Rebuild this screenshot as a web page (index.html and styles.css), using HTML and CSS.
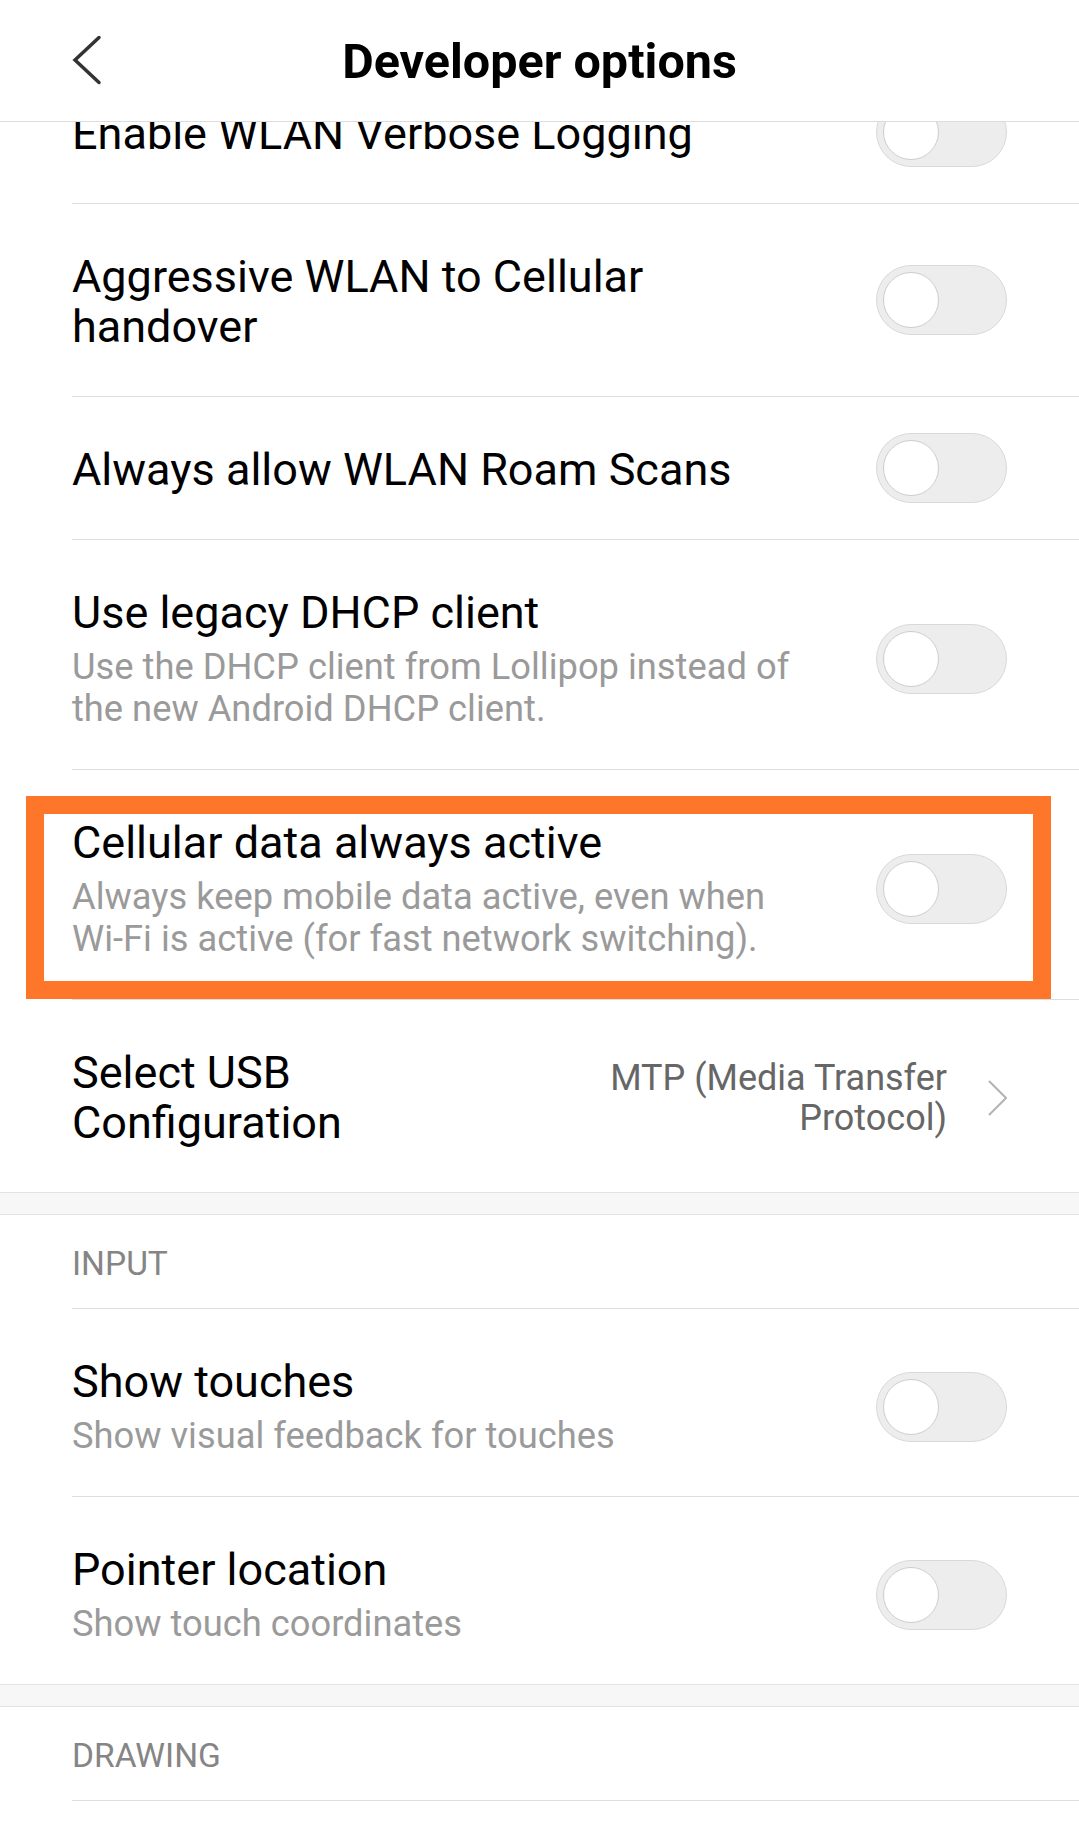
FILE: index.html
```html
<!DOCTYPE html>
<html lang="en">
<head>
<meta charset="utf-8">
<title>Developer options</title>
<link rel="stylesheet" href="styles.css">
</head>
<body>
<div class="screen">
  <header class="topbar">
    <div class="back">
      <svg width="30" height="50" viewBox="0 0 30 50" aria-hidden="true">
        <polyline points="27,2.5 3,25 27,47.5" fill="none" stroke="#333" stroke-width="3.5" stroke-linecap="round" stroke-linejoin="miter"/>
      </svg>
    </div>
    <h1 class="title">Developer options</h1>
    <div class="spacer"></div>
  </header>

  <main class="list">
    <section class="group">
      <div class="row scrolled">
        <div class="text"><div class="t">Enable WLAN Verbose Logging</div></div>
        <span class="switch"><span class="knob"></span></span>
      </div>
      <div class="row">
        <div class="text"><div class="t">Aggressive WLAN to Cellular handover</div></div>
        <span class="switch"><span class="knob"></span></span>
      </div>
      <div class="row">
        <div class="text"><div class="t">Always allow WLAN Roam Scans</div></div>
        <span class="switch"><span class="knob"></span></span>
      </div>
      <div class="row sub">
        <div class="text">
          <div class="t">Use legacy DHCP client</div>
          <div class="s">Use the DHCP client from Lollipop instead of the new Android DHCP client.</div>
        </div>
        <span class="switch"><span class="knob"></span></span>
      </div>
      <div class="row sub highlighted">
        <div class="text">
          <div class="t">Cellular data always active</div>
          <div class="s">Always keep mobile data active, even when Wi-Fi is active (for fast network switching).</div>
        </div>
        <span class="switch"><span class="knob"></span></span>
        <span class="mark"></span>
      </div>
      <div class="row usb last">
        <div class="t usb-title">Select USB Configuration</div>
        <div class="value">MTP (Media Transfer Protocol)</div>
        <svg class="chev" width="19" height="36" viewBox="0 0 19 36" aria-hidden="true">
          <polyline points="1,1 18,18 1,35" fill="none" stroke="#b3b3b3" stroke-width="2"/>
        </svg>
      </div>
    </section>

    <div class="gap"></div>

    <section class="group">
      <div class="section">INPUT</div>
      <div class="row sub">
        <div class="text">
          <div class="t">Show touches</div>
          <div class="s">Show visual feedback for touches</div>
        </div>
        <span class="switch"><span class="knob"></span></span>
      </div>
      <div class="row sub last">
        <div class="text">
          <div class="t">Pointer location</div>
          <div class="s">Show touch coordinates</div>
        </div>
        <span class="switch"><span class="knob"></span></span>
      </div>
    </section>

    <div class="gap"></div>

    <section class="group">
      <div class="section">DRAWING</div>
    </section>
  </main>
</div>
</body>
</html>
```

FILE: styles.css
```css
* {
  box-sizing: border-box;
}

html, body {
  margin: 0;
  padding: 0;
  background: #ffffff;
}

body {
  font-family: Roboto, "Noto Sans", "Liberation Sans", sans-serif;
  color: #000;
}

.screen {
  width: 1079px;
  height: 1843px;
  overflow: hidden;
  background: #fff;
}

.topbar {
  height: 122px;
  display: grid;
  grid-template-columns: 1fr auto 1fr;
  align-items: center;
  border-bottom: 1px solid #dcdcdc;
  background: #fff;
  position: relative;
  z-index: 2;
}

.back {
  padding-left: 72px;
  display: flex;
  align-items: center;
  height: 100%;
  padding-bottom: 2px;
}

.back svg {
  display: block;
}

.title {
  margin: 0;
  font-size: 48.5px;
  font-weight: 700;
  line-height: 1;
  padding-top: 3px;
}

.list {
  overflow: hidden;
}

.row {
  display: flex;
  align-items: center;
  margin-left: 72px;
  padding: 48px 72px 44px 0;
  border-bottom: 1px solid #dddddd;
  position: relative;
}

.row.sub {
  padding-bottom: 39px;
}

.row.last {
  border-bottom: none;
}

.row.scrolled {
  margin-top: -61px;
}

.text {
  flex: 0 1 740px;
}

.t {
  font-size: 45px;
  line-height: 50px;
  color: #000;
}

.s {
  font-size: 36.3px;
  line-height: 42px;
  color: #9a9a9a;
  margin-top: 8px;
}

.switch {
  margin: -12px 0 -8px auto;
  flex: none;
  width: 131px;
  height: 70px;
  border-radius: 35px;
  background: #ededed;
  border: 1.5px solid #d9d9d9;
  position: relative;
}

.row.sub .switch {
  margin: -10px 0 -10px auto;
}

.knob {
  position: absolute;
  left: 5.5px;
  top: 5.5px;
  width: 56px;
  height: 56px;
  border-radius: 50%;
  background: #fff;
  border: 1.5px solid #cdcdcd;
}

.mark {
  position: absolute;
  top: 26px;
  left: -46px;
  right: 28px;
  bottom: 0;
  border: 18px solid #fe762a;
  pointer-events: none;
}

.usb-title {
  flex: none;
  width: 340px;
}

.value {
  margin-left: auto;
  max-width: 400px;
  text-align: right;
  font-size: 36px;
  line-height: 40px;
  color: #666666;
}

.chev {
  flex: none;
  margin-left: 41px;
  display: block;
}

.gap {
  height: 23px;
  background: #f7f7f7;
  border-top: 1px solid #e3e3e3;
  border-bottom: 1px solid #e3e3e3;
}

.section {
  margin-left: 72px;
  height: 94px;
  display: flex;
  align-items: center;
  padding-top: 3px;
  font-size: 33.5px;
  color: #858585;
  border-bottom: 1px solid #dddddd;
}
```
